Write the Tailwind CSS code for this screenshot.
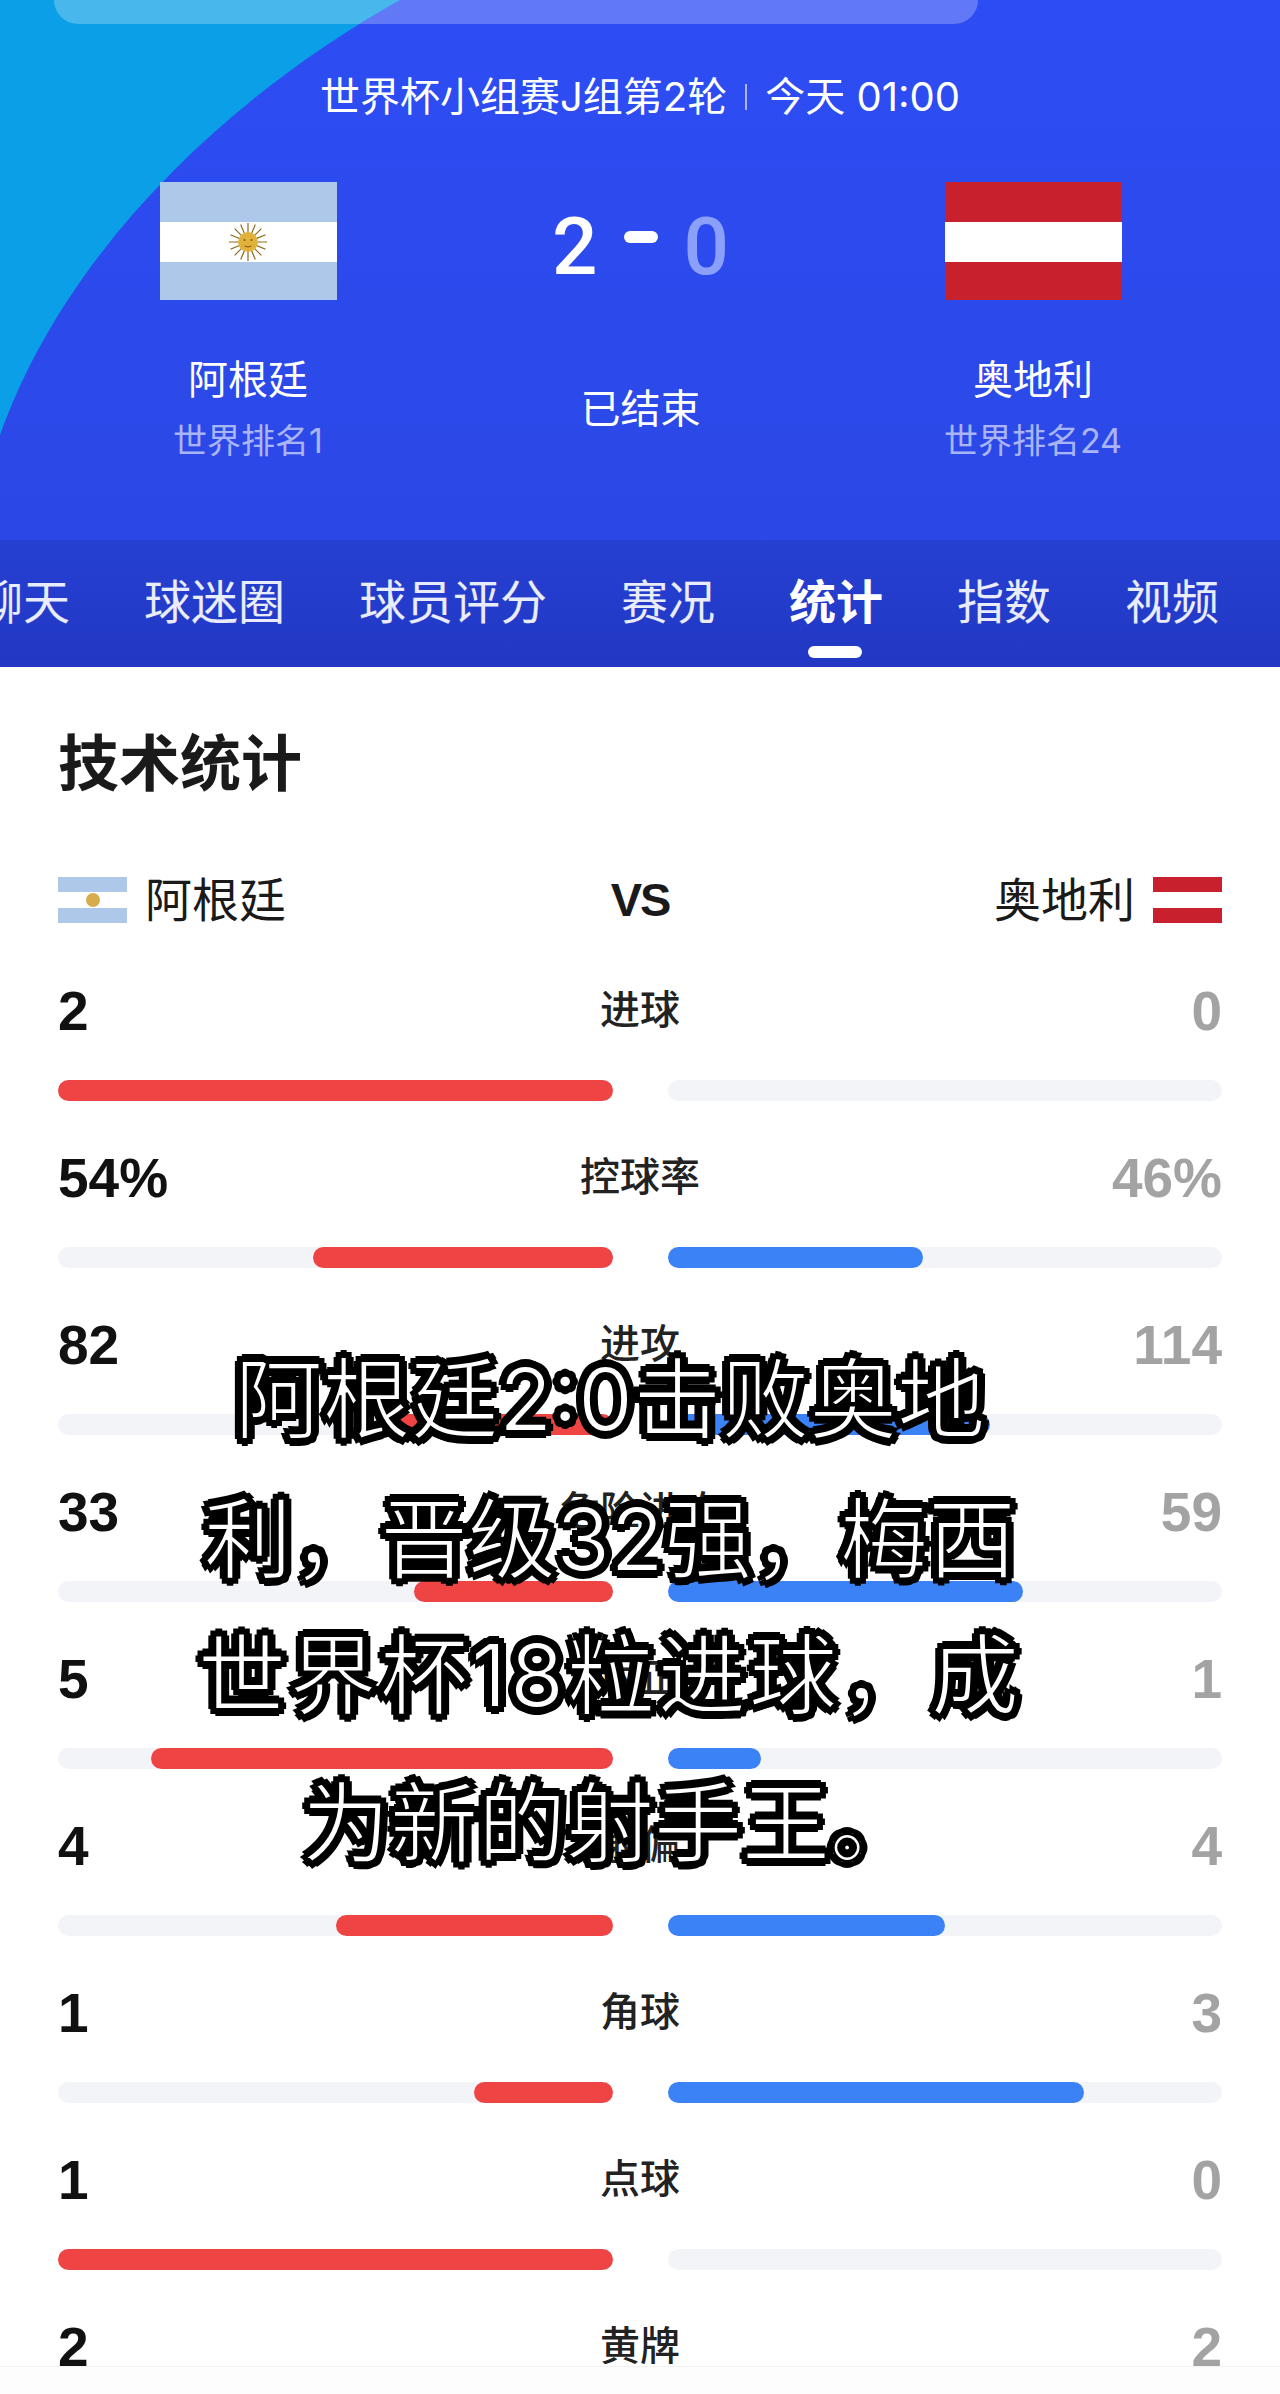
<!DOCTYPE html>
<html lang="zh-CN">
<head>
  <meta charset="UTF-8">
  <title>技术统计</title>
  <script src="https://cdn.jsdelivr.net/npm/@tailwindcss/browser@4"></script>
</head>
<body class="relative h-[2394px] overflow-hidden bg-white font-[family-name:Inter,'Noto_Sans_CJK_SC',sans-serif]">

  <!-- match header -->
  <header class="relative flex h-[667px] flex-col overflow-hidden bg-gradient-to-b from-[#2d4df4] to-[#2b46e2] text-white">
    <svg class="absolute left-0 top-0" width="420" height="440" viewBox="0 0 420 440">
      <path d="M400 0C240 90 70 240 0 435V0Z" fill="#0a9fe6"/>
    </svg>

    <div class="relative ml-[54px] h-6 w-[924px] rounded-b-3xl bg-white/25"></div>

    <div class="relative mt-[45px] flex h-14 items-center justify-center text-[40px] leading-[56px]">
      <span>世界杯小组赛J组第2轮</span>
      <span class="mx-[18px] h-[26px] w-[2px] bg-white/60"></span>
      <span>今天 01:00</span>
    </div>

    <div class="relative mt-[57px] grid grid-cols-[404px_1fr_404px] pl-[46px] pr-[45px]">
      <div class="flex flex-col items-center">
        <div class="flex h-[118px] w-[177px] flex-col">
          <div class="h-10 bg-[#adc8e8]"></div>
          <div class="flex h-10 items-center justify-center bg-white">
            <svg width="40" height="40" viewBox="0 0 40 40">
              <g stroke="#8a6a1c" stroke-width="1.2">
                <path d="M20 1V39M1 20H39M6.6 6.6L33.4 33.4M33.4 6.6L6.6 33.4M12.7 2.4L27.3 37.6M27.3 2.4L12.7 37.6M2.4 12.7L37.6 27.3M37.6 12.7L2.4 27.3"/>
              </g>
              <circle cx="20" cy="20" r="10" fill="#e0b23c"/>
              <circle cx="16.5" cy="18" r="1" fill="#7a5a14"/>
              <circle cx="23.5" cy="18" r="1" fill="#7a5a14"/>
              <path d="M16.5 24Q20 26 23.5 24" stroke="#7a5a14" fill="none"/>
            </svg>
          </div>
          <div class="h-[38px] bg-[#adc8e8]"></div>
        </div>
        <div class="mt-[52px] text-[40px] leading-[56px]">阿根廷</div>
        <div class="mt-[11px] text-[34px] leading-[44px] text-white/60">世界排名1</div>
      </div>

      <div class="flex flex-col items-center">
        <div class="flex h-[118px] translate-y-[6px] items-center gap-[26px] font-[family-name:Roboto,sans-serif] text-[80px] font-medium leading-none">
          <span>2</span>
          <span class="mb-[20px] h-3 w-[34px] rounded-full bg-white"></span>
          <span class="text-[#8ba0fb]">0</span>
        </div>
        <div class="mt-[81px] text-[40px] leading-[56px]">已结束</div>
      </div>

      <div class="flex flex-col items-center">
        <div class="flex h-[118px] w-[177px] flex-col">
          <div class="h-10 bg-[#c8202c]"></div>
          <div class="h-10 bg-white"></div>
          <div class="h-[38px] bg-[#c8202c]"></div>
        </div>
        <div class="mt-[52px] text-[40px] leading-[56px]">奥地利</div>
        <div class="mt-[11px] text-[34px] leading-[44px] text-white/60">世界排名24</div>
      </div>
    </div>

    <nav class="relative mt-auto h-[127px] bg-gradient-to-b from-[#2640d2] to-[#2238c4]">
      <div class="ml-[-24px] flex gap-[74px] pt-[34px] text-[47px] leading-[56px] text-white/90 whitespace-nowrap">
        <span>聊天</span>
        <span>球迷圈</span>
        <span>球员评分</span>
        <span>赛况</span>
        <span class="relative font-bold text-white">统计
          <span class="absolute left-[19px] top-[72px] h-3 w-[54px] rounded-full bg-white"></span>
        </span>
        <span>指数</span>
        <span>视频</span>
      </div>
    </nav>
  </header>

  <!-- stats -->
  <main class="px-[58px] text-[#1a1a1a]">
    <h1 class="pt-[57px] text-[61px] font-bold leading-[80px]">技术统计</h1>

    <div class="mt-[72px] flex h-12 items-center justify-between text-[47px]">
      <div class="flex items-center gap-[18px]">
        <div class="flex h-[46px] w-[69px] flex-col">
          <div class="h-[15px] bg-[#adc8e8]"></div>
          <div class="flex h-4 items-center justify-center bg-white">
            <span class="h-[14px] w-[14px] rounded-full bg-[#d6ac4c]"></span>
          </div>
          <div class="h-[15px] bg-[#adc8e8]"></div>
        </div>
        <span>阿根廷</span>
      </div>
      <span class="font-[family-name:'Liberation_Sans',sans-serif] text-[47px] font-bold tracking-[-2px]">VS</span>
      <div class="flex items-center gap-[18px]">
        <span>奥地利</span>
        <div class="flex h-[46px] w-[69px] flex-col">
          <div class="h-[15px] bg-[#c8202c]"></div>
          <div class="h-4 bg-white"></div>
          <div class="h-[15px] bg-[#c8202c]"></div>
        </div>
      </div>
    </div>

    <div id="stats" class="mt-[57px] flex flex-col gap-[47px]"></div>
  </main>

  <!-- caption over the page -->
  <div class="absolute left-0 top-[1329px] w-[1220px] text-center text-[88px] leading-[140px] text-white [-webkit-text-stroke:2px_#000] [text-shadow:7px_0_#000,-7px_0_#000,0_7px_#000,0_-7px_#000,5px_5px_#000,-5px_5px_#000,5px_-5px_#000,-5px_-5px_#000]">
    <p>阿根廷2:0击败奥地</p>
    <p>利，晋级32强，梅西</p>
    <p class="-mt-1 tracking-[3px]">世界杯18粒进球，成</p>
    <p class="mt-2">为新的射手王。</p>
  </div>

  <div class="absolute bottom-0 left-0 h-7 w-full border-t border-[#f2f2f2] bg-[#fdfdfd]"></div>

  <script>
    const stats = [
      ["进球", "2", "0", 100, 0],
      ["控球率", "54%", "46%", 54, 46],
      ["进攻", "82", "114", 41.8, 58.2],
      ["危险进攻", "33", "59", 35.9, 64.1],
      ["射正", "5", "1", 83.3, 16.7],
      ["射偏", "4", "4", 50, 50],
      ["角球", "1", "3", 25, 75],
      ["点球", "1", "0", 100, 0],
      ["黄牌", "2", "2", 50, 50],
    ];

    document.getElementById("stats").innerHTML = stats.map(([label, home, away, homePct, awayPct]) => `
      <div>
        <div class="relative flex h-[60px] items-center justify-between font-[family-name:'Liberation_Sans',sans-serif] text-[55px] font-bold leading-[60px]">
          <span class="text-[#111]">${home}</span>
          <span class="absolute left-1/2 top-[-4px] -translate-x-1/2 font-[family-name:'Noto_Sans_CJK_SC',sans-serif] text-[40px] font-medium text-[#222]">${label}</span>
          <span class="text-[#a3a3a3]">${away}</span>
        </div>
        <div class="mt-[39px] flex justify-between">
          <div class="flex h-[21px] w-[555px] justify-end rounded-full bg-[#f3f4f8]">
            <div class="h-full rounded-full bg-[#ef4444]" style="width:${homePct}%"></div>
          </div>
          <div class="h-[21px] w-[554px] rounded-full bg-[#f3f4f8]">
            <div class="h-full rounded-full bg-[#3b82f6]" style="width:${awayPct}%"></div>
          </div>
        </div>
      </div>`).join("");
  </script>
</body>
</html>
